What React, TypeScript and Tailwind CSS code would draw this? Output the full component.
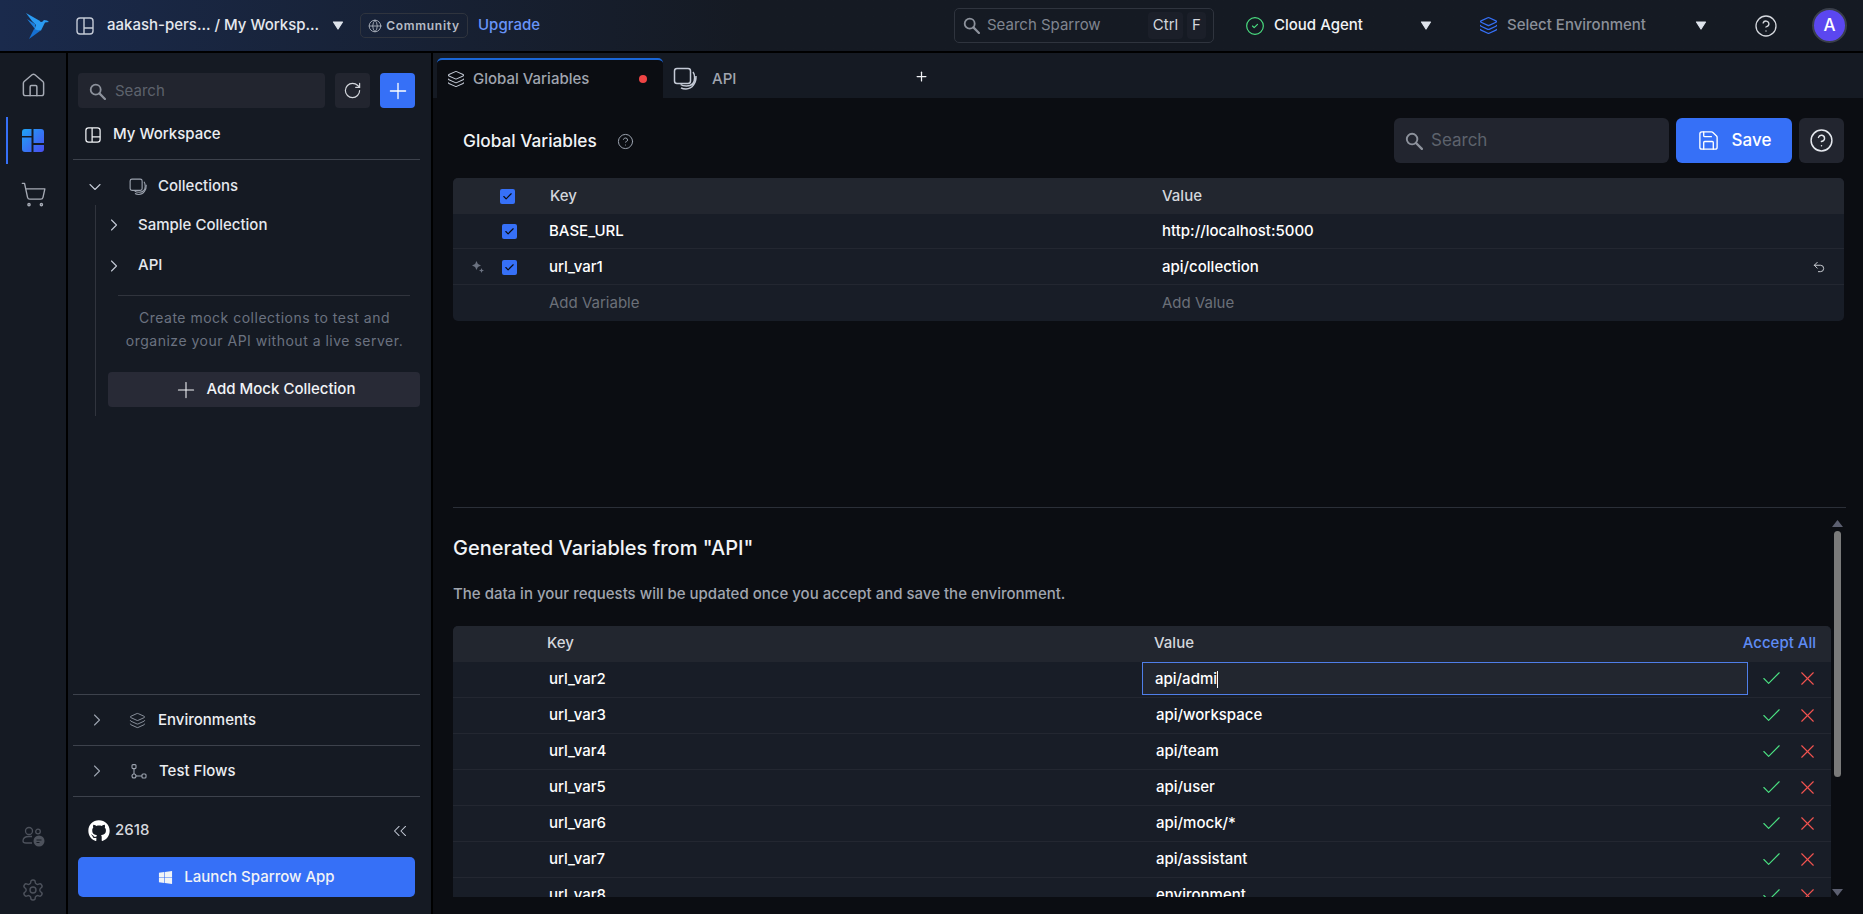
import React from 'react';
import {
  Check, ChevronDown, ChevronRight, ChevronsLeft, CircleCheck, CircleHelp, Globe, Home, Layers, Plus, RotateCw, Save, ShoppingCart, Undo2, X,
} from 'lucide-react';
import { FaGithub, FaWindows } from 'react-icons/fa';

const Caret = ({ className = '' }: { className?: string }) => (
  <svg width="12" height="9" viewBox="0 0 12 9" className={className}>
    <path d="M1.500 1h9L6 8z" fill="#dfe4ec" stroke="#dfe4ec" strokeWidth="1.200" strokeLinejoin="round" />
  </svg>
);

const Bird = () => (
  <svg width="24" height="26" viewBox="0 0 24 26">
    <path d="M0 0l14 8-1 7-7-7z" fill="#2a9bf2" />
    <path d="M1 6l8 5v5z" fill="#1c7fdc" />
    <path d="M11 8l5 1 2-2 3 .5 2 1.500-4 .5-4 8-7 1z" fill="#2a9bf2" />
    <path d="M8 16l6 2-11 8z" fill="#1670d2" />
  </svg>
);

const SearchIcon = ({ size = 17, color = '#8d929c' }: { size?: number; color?: string }) => (
  <svg width={size} height={size} viewBox="0 0 16 16" fill="none" stroke={color}>
    <circle cx="6.300" cy="6.300" r="4.700" strokeWidth="1.700" />
    <path d="M9.800 9.800L15 15" strokeWidth="2.100" strokeLinecap="round" />
  </svg>
);

const WorkspaceIcon = ({ size = 18, color = '#c4cad6' }: { size?: number; color?: string }) => (
  <svg width={size} height={size} viewBox="0 0 18 18" fill="none" stroke={color} strokeWidth="1.4">
    <rect x="1" y="1" width="16" height="16" rx="3" />
    <path d="M8 1v16M8 11h9" />
  </svg>
);

const StackIcon = ({ size = 18, color = '#c4cad6' }: { size?: number; color?: string }) => (
  <svg width={size} height={size} viewBox="0 0 24 24" fill="none" stroke={color} strokeWidth="1.500">
    <rect x="1.500" y="1.500" width="16" height="15" rx="2.500" />
    <path d="M20 5c1.400 1.600 1.600 3.500 1.600 6 0 5-3 8-8 8-2.400 0-4.500-.2-6-1.500" />
    <path d="M23 9c.3 6.500-3.500 13-10 13-2 0-3.500-.3-5-1.200" />
  </svg>
);

const CollectionsIconActive = () => (
  <svg width="22" height="23" viewBox="0 0 22 23">
    <defs>
      <linearGradient id="railBlue" x1="0" y1="0" x2="1" y2="1">
        <stop offset="0" stopColor="#1ea5f5" />
        <stop offset="1" stopColor="#4a4df0" />
      </linearGradient>
    </defs>
    <path d="M3 0h6.500v7H0V3a3 3 0 0 1 3-3zM0 8.500h9.500V23H3a3 3 0 0 1-3-3zM11.500 0H19a3 3 0 0 1 3 3v11H11.500zM11.500 16H22v4a3 3 0 0 1-3 3h-7.500z" fill="url(#railBlue)" />
  </svg>
);

const TeamIcon = () => (
  <svg width="23" height="21" viewBox="0 0 23 21" fill="none" stroke="#4d525c" strokeWidth="1.300">
    <circle cx="7" cy="5" r="3.500" />
    <circle cx="16" cy="5.500" r="2.300" />
    <path d="M1 15c0-3 2-4.500 6-4.500h3M1 15c0 1.500 1 2 3 2h6" />
    <circle cx="17" cy="15" r="5.500" fill="#4d525c" stroke="none" />
    <path d="M14.500 14h5M14.500 16.500h3" stroke="#151a23" strokeWidth="1" />
  </svg>
);

const GearIcon = () => (
  <svg width="24" height="24" viewBox="0 0 24 24" fill="none" stroke="#4d525c" strokeWidth="1.400" strokeLinejoin="round">
    <path d="M12.220 2h-.440a2 2 0 0 0-2 2v.180a2 2 0 0 1-1 1.730l-.430.250a2 2 0 0 1-2 0l-.150-.080a2 2 0 0 0-2.730.730l-.220.380a2 2 0 0 0 .730 2.730l.150.100a2 2 0 0 1 1 1.720v.510a2 2 0 0 1-1 1.740l-.150.090a2 2 0 0 0-.730 2.730l.220.380a2 2 0 0 0 2.730.730l.150-.080a2 2 0 0 1 2 0l.430.250a2 2 0 0 1 1 1.730V20a2 2 0 0 0 2 2h.440a2 2 0 0 0 2-2v-.180a2 2 0 0 1 1-1.730l.430-.250a2 2 0 0 1 2 0l.150.080a2 2 0 0 0 2.730-.730l.220-.390a2 2 0 0 0-.730-2.730l-.150-.080a2 2 0 0 1-1-1.740v-.500a2 2 0 0 1 1-1.740l.150-.090a2 2 0 0 0 .730-2.730l-.220-.380a2 2 0 0 0-2.730-.730l-.150.080a2 2 0 0 1-2 0l-.430-.250a2 2 0 0 1-1-1.730V4a2 2 0 0 0-2-2z" />
    <circle cx="12" cy="12" r="3" />
  </svg>
);

const FlowIcon = () => (
  <svg width="16" height="15" viewBox="0 0 16 15" fill="none" stroke="#9ca3af" strokeWidth="1.100">
    <rect x="1" y="0.600" width="4" height="4" rx="1" />
    <circle cx="3" cy="12" r="2" />
    <rect x="11" y="10" width="4" height="4" rx="1" />
    <path d="M3 4.600V10M5 12h6" />
  </svg>
);

const Sparkle = () => (
  <svg width="12" height="12" viewBox="0 0 12 12" fill="#6b7280">
    <path d="M4.500 0l1.400 3.100L9 4.500 5.900 5.900 4.500 9 3.100 5.900 0 4.500l3.100-1.400z" />
    <path d="M9.500 7l.7 1.800 1.800.7-1.800.7-.7 1.800-.7-1.800-1.800-.7 1.800-.7z" />
  </svg>
);

const Box = () => (
  <span className="w-[15px] h-[15px] rounded-[2px] bg-[#3670f7] flex items-center justify-center">
    <Check size={11} strokeWidth={2.5} className="text-[#0b0d12]" />
  </span>
);

const generated = [
  ['url_var3', 'api/workspace'],
  ['url_var4', 'api/team'],
  ['url_var5', 'api/user'],
  ['url_var6', 'api/mock/*'],
  ['url_var7', 'api/assistant'],
  ['url_var8', 'environment'],
];

const RowActions = () => (
  <div className="flex items-center gap-[13px] ml-auto -mr-[4px]">
    <Check size={23} strokeWidth={1.2} className="text-[#4ade80]" />
    <X size={23} strokeWidth={1.2} className="text-[#f0524f]" />
  </div>
);

export default function App() {
  return (
    <div className="w-screen h-screen overflow-hidden bg-black flex flex-col text-white text-[15px]" style={{ fontFamily: 'Inter, "Noto Sans", sans-serif' }}>
      {/* top bar */}
      <header className="h-[51px] shrink-0 flex items-center bg-gradient-to-r from-[#1a2a4c] via-[#151a23] via-40% to-[#151a23]">
        <div className="ml-[26px] w-[50px] flex"><Bird /></div>
        <WorkspaceIcon />
        <span className="ml-[13px] w-[210px] text-[#e5e8ee] font-medium whitespace-nowrap">aakash-pers... / My Worksp...</span>
        <Caret className="ml-[15px]" />
        <div className="ml-[16px] h-[25px] w-[108px] border border-[#2f343e] rounded-[5px] flex items-center justify-center gap-[4px] text-[12px] font-semibold tracking-[0.7px] text-[#b6bbc5]">
          <Globe size={14} strokeWidth={1.4} />
          Community
        </div>
        <span className="ml-[10px] w-[61px] text-[#6894f9] font-medium">Upgrade</span>
        <div className="ml-[415px] w-[260px] h-[35px] border border-[#2f343e] rounded-[5px] flex items-center pl-[8px] pr-[7px]">
          <SearchIcon />
          <span className="ml-[7px] text-[#808590]">Search Sparrow</span>
          <span className="ml-auto h-[27px] w-[35px] rounded-[4px] bg-[#1b1f29] flex items-center justify-center text-[#d4d7dd]">Ctrl</span>
          <span className="ml-[4px] h-[27px] w-[19px] rounded-[4px] bg-[#1b1f29] flex items-center justify-center text-[#d4d7dd]">F</span>
        </div>
        <CircleCheck size={20} strokeWidth={1.4} className="ml-[31px] text-[#4ade80]" />
        <span className="ml-[9px] w-[146px] font-medium text-[#f1f3f6]">Cloud Agent</span>
        <Caret />
        <Layers size={19} strokeWidth={1.6} className="ml-[47px] text-[#3670f7]" />
        <span className="ml-[9px] w-[188px] font-medium text-[#8a8f99]">Select Environment</span>
        <Caret />
        <CircleHelp size={24} strokeWidth={1.3} className="ml-[47px] text-[#d5d8de]" />
        <div className="ml-[34px] w-[35px] h-[35px] rounded-full bg-[#5b47f0] border-2 border-[#3a3f4b] flex items-center justify-center text-[17px] font-medium">A</div>
      </header>

      <div className="mt-[2px] flex-1 min-h-0 flex">
        {/* rail */}
        <nav className="w-[66px] shrink-0 bg-[#151a23] flex flex-col items-center relative pt-[19px]">
          <Home size={27} strokeWidth={1.3} className="text-[#a6abb5]" />
          <div className="mt-[30px] relative"><CollectionsIconActive /></div>
          <span className="absolute left-[6px] top-[64px] w-[2px] h-[47px] bg-[#3670f7]" />
          <ShoppingCart size={27} strokeWidth={1.2} className="mt-[29px] text-[#a6abb5]" />
          <div className="mt-auto"><TeamIcon /></div>
          <div className="mt-[31px] mb-[12px]"><GearIcon /></div>
        </nav>

        {/* sidebar */}
        <aside className="ml-[2px] w-[363px] shrink-0 bg-[#151a23] flex flex-col">
          <div className="pt-[20px] pl-[10px] pr-[16px] flex gap-[10px]">
            <div className="w-[247px] h-[35px] pt-[1px] rounded-[4px] bg-[#22252f] flex items-center pl-[11px]">
              <SearchIcon />
              <span className="ml-[9px] text-[#5d626c]">Search</span>
            </div>
            <div className="w-[35px] h-[35px] rounded-[4px] bg-[#22252f] flex items-center justify-center">
              <RotateCw size={19} strokeWidth={1.5} className="text-[#d5d8de]" />
            </div>
            <div className="w-[35px] h-[35px] rounded-[4px] bg-[#3670f7] flex items-center justify-center">
              <Plus size={26} strokeWidth={1.2} />
            </div>
          </div>
          <div className="ml-[5px] mr-[11px] h-[52px] pt-[2px] border-b border-[#3d424c] flex items-center pl-[12px]">
            <WorkspaceIcon size={16} color="#f1f3f6" />
            <span className="ml-[12px] font-medium text-[#eceef2]">My Workspace</span>
          </div>
          <div className="flex items-center h-[45px] pt-[8px] pl-[17px]">
            <ChevronDown size={20} strokeWidth={1.3} className="text-[#c4cad6]" />
            <span className="ml-[24px]"><StackIcon size={18} color="#9ca3af" /></span>
            <span className="ml-[11px] text-[#e5e8ee] font-medium">Collections</span>
          </div>
          <div className="ml-[27px] h-[211px] border-l border-[#30343d] flex flex-col">
            <div className="flex items-center h-[40px] pl-[8px]">
              <ChevronRight size={20} strokeWidth={1.3} className="text-[#c4cad6]" />
              <span className="ml-[14px] font-medium text-[#e5e8ee]">Sample Collection</span>
            </div>
            <div className="flex items-center h-[40px] pt-[1px] pl-[8px]">
              <ChevronRight size={20} strokeWidth={1.3} className="text-[#c4cad6]" />
              <span className="ml-[14px] font-medium text-[#e5e8ee]">API</span>
            </div>
            <div className="ml-[22px] mr-[21px] mt-[10px] border-t border-[#30343d]" />
            <p className="ml-[12px] mr-[10px] mt-[10px] text-center text-[#6b7280] leading-[23px] text-[14px] tracking-[0.5px]">
              Create mock collections to test and<br />organize your API without a live server.
            </p>
            <div className="ml-[12px] mr-[11px] mt-[20px] h-[35px] rounded-[4px] bg-[#282a36] flex items-center justify-center gap-[8px] font-medium text-[#f1f3f6]">
              <Plus size={26} strokeWidth={1} />
              Add Mock Collection
            </div>
          </div>
          <div className="mt-auto mx-[5px] mr-[11px] h-[51px] border-t border-[#3d424c] flex items-center pl-[14px]">
            <ChevronRight size={20} strokeWidth={1.3} className="text-[#9ca3af]" />
            <Layers size={17} strokeWidth={1.2} className="ml-[22px] text-[#9ca3af]" />
            <span className="ml-[12px] font-medium text-[#eceef2]">Environments</span>
          </div>
          <div className="mx-[5px] mr-[11px] h-[51px] border-t border-[#3d424c] flex items-center pl-[14px]">
            <ChevronRight size={20} strokeWidth={1.3} className="text-[#9ca3af]" />
            <span className="ml-[24px]"><FlowIcon /></span>
            <span className="ml-[12px] font-medium text-[#eceef2]">Test Flows</span>
          </div>
          <div className="mx-[5px] mr-[11px] h-[61px] pt-[7px] border-t border-[#3d424c] flex items-center pl-[15px] pr-[9px]">
            <FaGithub size={22} className="text-white" />
            <span className="ml-[5px] text-[#d5d8de] font-medium">2618</span>
            <ChevronsLeft size={22} strokeWidth={1.1} className="ml-auto text-[#c4cad6]" />
          </div>
          <div className="ml-[10px] mr-[16px] mb-[17px] h-[40px] rounded-[5px] bg-[#3670f7] flex items-center justify-center gap-[11px] text-[#f1f3f6] font-medium">
            <FaWindows size={15} />
            Launch Sparrow App
          </div>
        </aside>

        {/* main */}
        <main className="flex-1 min-w-0 ml-[2px] bg-[#0b0d12] flex flex-col">
          <div className="h-[45px] shrink-0 bg-[#151a23] flex items-end pl-[4px]">
            <div className="w-[226px] h-[40px] rounded-t-[5px] border-t-2 border-[#1a66d6] bg-[#0b0d12] flex items-center pl-[10px] pr-[16px]">
              <Layers size={18} strokeWidth={1.4} className="text-[#c4cad6]" />
              <span className="ml-[8px] text-[#a0a5af] font-medium">Global Variables</span>
              <span className="ml-auto w-[8px] h-[8px] rounded-full bg-[#ef4444]" />
            </div>
            <div className="w-[251px] h-[40px] pt-[2px] flex items-center pl-[10px]">
              <StackIcon size={24} color="#c4cad6" />
              <span className="ml-[15px] text-[#a0a5af] font-medium">API</span>
            </div>
            <Plus size={15} strokeWidth={2} className="mb-[14px] text-[#f1f3f6]" />
          </div>

          <div className="flex-1 min-h-0 flex flex-col pl-[20px] pr-[19px]">
            <div className="h-[80px] shrink-0 pt-[20px] flex items-start">
              <div className="h-[45px] pt-[1px] flex items-center pl-[10px]">
                <span className="text-[17.25px] font-medium text-[#f1f3f6]">Global Variables</span>
                <CircleHelp size={17} strokeWidth={1.4} className="ml-[20px] text-[#9ca3af]" />
              </div>
              <div className="ml-auto w-[275px] h-[45px] pt-[1px] rounded-[6px] bg-[#22252f] flex items-center pl-[11px]">
                <SearchIcon size={18} />
                <span className="ml-[8px] text-[17px] text-[#5d626c]">Search</span>
              </div>
              <div className="ml-[7px] w-[116px] h-[45px] rounded-[6px] bg-[#3670f7] flex items-center justify-center gap-[12px] text-[17px] font-medium">
                <Save size={23} strokeWidth={1.4} />
                Save
              </div>
              <div className="ml-[7px] w-[45px] h-[45px] rounded-[6px] bg-[#22252f] flex items-center justify-center">
                <CircleHelp size={25} strokeWidth={1.4} className="text-[#e5e8ee]" />
              </div>
            </div>

            <div className="shrink-0 rounded-[5px] overflow-hidden bg-[#181d27] font-medium">
              <div className="h-[36px] bg-[#22262f] grid grid-cols-[97px_612px_1fr] items-center text-[#d4d7dd]">
                <span className="pl-[47px]"><Box /></span>
                <span>Key</span>
                <span>Value</span>
              </div>
              <div className="h-[35px] border-b border-[#232731] grid grid-cols-[96px_613px_1fr] items-center">
                <span className="pl-[49px]"><Box /></span>
                <span>BASE_URL</span>
                <span>http://localhost:5000</span>
              </div>
              <div className="h-[36px] pt-[1px] border-b border-[#232731] grid grid-cols-[96px_613px_1fr_32px] items-center">
                <span className="pl-[19px] flex items-center gap-[18px]"><Sparkle /><Box /></span>
                <span>url_var1</span>
                <span>api/collection</span>
                <Undo2 size={14} strokeWidth={1.6} className="text-[#d5d8de]" />
              </div>
              <div className="h-[36px] grid grid-cols-[96px_613px_1fr] items-center text-[#6b7079] font-normal">
                <span />
                <span>Add Variable</span>
                <span>Add Value</span>
              </div>
            </div>

            <div className="h-[186px] shrink-0" />

            <div className="flex-1 min-h-0 mr-[-2px] border-t border-[#2b2f38] flex mb-[17px]">
              <div className="w-[1378px] overflow-hidden shrink-0">
                <h2 className="mt-[28px] text-[20px] leading-[24px] font-medium text-[#f1f3f6]">Generated Variables from "API"</h2>
                <p className="mt-[24px] leading-[20px] text-[#a0a5af] font-medium">The data in your requests will be updated once you accept and save the environment.</p>
                <div className="mt-[22px] rounded-t-[5px] overflow-hidden bg-[#181d27] font-medium">
                  <div className="h-[36px] pb-[2px] bg-[#22262f] grid grid-cols-[94px_607px_1fr] items-center text-[#d4d7dd] pr-[15px]">
                    <span />
                    <span>Key</span>
                    <div className="flex items-center">
                      <span>Value</span>
                      <span className="ml-auto text-[#5f8cf5]">Accept All</span>
                    </div>
                  </div>
                  <div className="h-[36px] border-b border-[#232731] grid grid-cols-[96px_593px_1fr] items-start">
                    <span />
                    <span className="h-[35px] flex items-center">url_var2</span>
                    <div className="flex items-center pr-[16px]">
                      <div className="w-[606px] h-[33px] bg-[#22262f] border border-[#4f7ee8] flex items-center pl-[12px] pt-[1px] shrink-0">
                        api/admi<span className="w-px h-[17px] bg-white" />
                      </div>
                      <RowActions />
                    </div>
                  </div>
                  {generated.map(([k, v]) => (
                    <div key={k} className="h-[36px] border-b border-[#232731] grid grid-cols-[96px_607px_1fr] items-center pr-[16px]">
                      <span />
                      <span>{k}</span>
                      <div className="flex items-center">
                        <span>{v}</span>
                        <RowActions />
                      </div>
                    </div>
                  ))}
                </div>
              </div>
              <div className="ml-[1px] w-[11px] shrink-0 flex flex-col items-center pt-[12px] pb-[1px]">
                <svg width="11" height="7" viewBox="0 0 11 7"><path d="M5.500 0L11 7H0z" fill="#5c5f70" /></svg>
                <div className="mt-[4px] w-[7px] h-[246px] rounded-full bg-[#7a7a7a]" />
                <svg width="11" height="7" viewBox="0 0 11 7" className="mt-auto"><path d="M0 0h11L5.500 7z" fill="#5c5f70" /></svg>
              </div>
            </div>
          </div>
        </main>
      </div>
    </div>
  );
}
